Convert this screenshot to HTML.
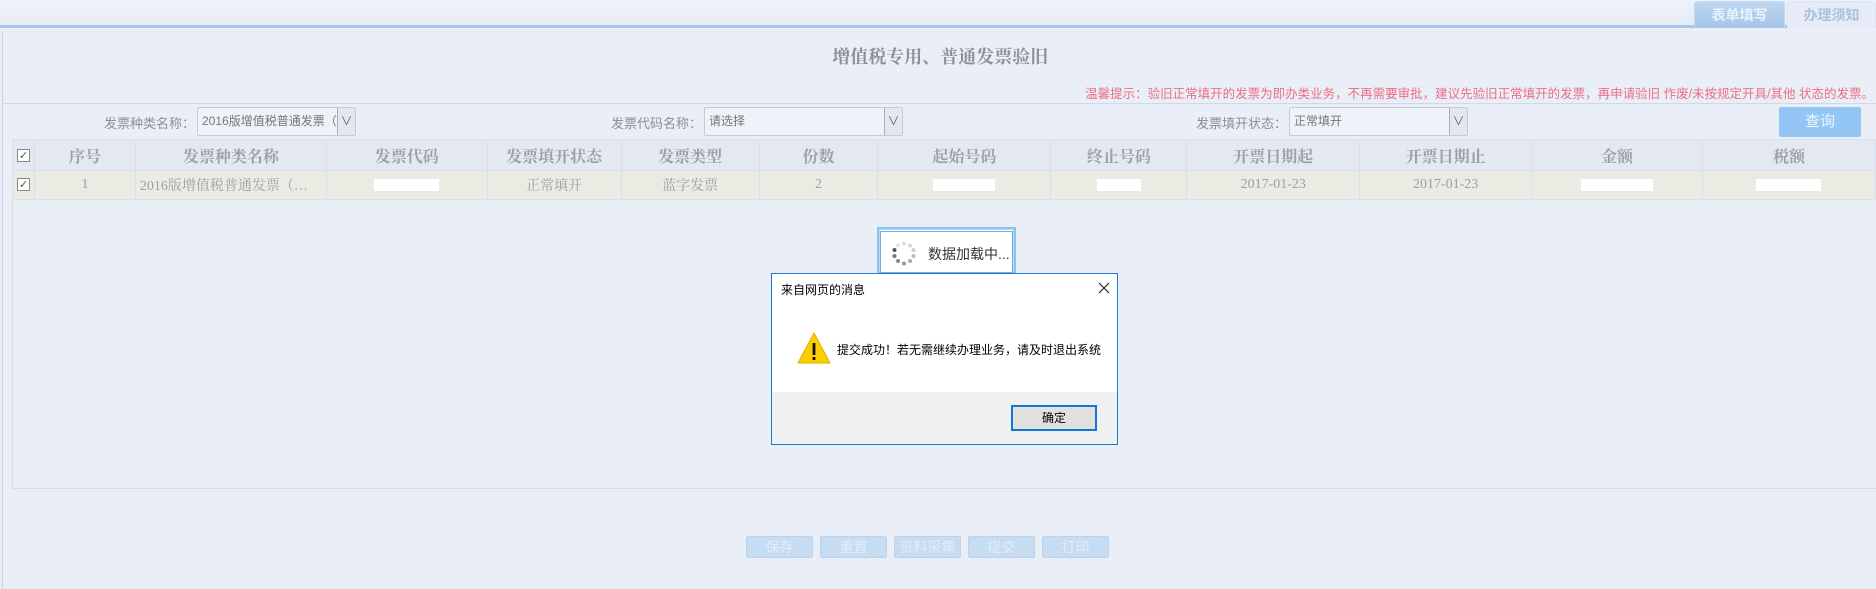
<!DOCTYPE html>
<html><head><meta charset="utf-8">
<style>
*{margin:0;padding:0;box-sizing:border-box}
body{width:1876px;height:589px;background:#e9eef7;font-family:"Liberation Sans","Noto Sans CJK SC",sans-serif;position:relative;overflow:hidden;color:#8a8f99}
.abs{position:absolute}
.topbar{left:0;top:0;width:1876px;height:28px;background:linear-gradient(#eef2fa,#e6ebf5);border-bottom:3px solid #aac6e8}
.tab{top:1px;height:27px;font-size:14px;font-weight:bold;text-align:center;line-height:27px;border:1px solid #c8d8ee;border-bottom:none;border-radius:3px 3px 0 0}
.panel{left:2px;top:31px;width:1874px;height:558px;border-left:1px solid #c5d3e8}
.lbl{font-size:13px;color:#8a8f99;top:113px}
.sel{top:107px;height:29px;border:1px solid #c4ccd8;background:#eef2f9;font-size:12px;color:#777;line-height:27px;padding-left:4px;border-radius:2px;overflow:hidden;white-space:nowrap}
.sel i{position:absolute;right:0;top:0;width:18px;height:27px;border-left:1px solid #a8b0bc;background:#e4e8ee;font-style:normal;text-align:center;font-size:12px;color:#666}
table{position:absolute;left:12px;top:139px;border-collapse:collapse;width:1864px}
td{border:1px solid #d8e0ec;text-align:center;font-family:"Liberation Serif","Noto Serif CJK SC",serif}
tr.h td{height:31px;background:#e3e8f3;font-size:16px;font-weight:bold;color:#9a9fa8}
tr.d td{height:29px;background:#ebebe3;font-size:14px;color:#9a9fa8}
.cb{display:inline-block;width:13px;height:13px;border:1px solid #888;background:#fff;font-size:11px;line-height:11px;color:#555;font-family:"DejaVu Sans",sans-serif}
.wb{display:inline-block;width:62px;height:12px;background:#fff;vertical-align:middle}
.btn{top:536px;width:67px;height:22px;background:#c6dcf2;border:1px solid #bcd2ec;border-radius:2px;color:#e4ecf6;font-size:14px;text-align:center;line-height:20px}
</style></head><body>
<div class="abs topbar"></div>
<div class="abs tab" style="left:1694px;width:91px;background:linear-gradient(#bcd6f0,#a6c6e8);color:#eaf2fb">表单填写</div>
<div class="abs tab" style="left:1787px;width:89px;background:#e6ebf6;color:#a7c1e2;border-color:#dde6f3">办理须知</div>
<div class="abs panel"></div>
<div class="abs" style="left:0;width:1876px;top:43px;text-align:center;font-size:18px;font-weight:bold;color:#8a8f99;font-family:'Liberation Serif','Noto Serif CJK SC',serif">&nbsp;增值税专用、普通发票验旧</div>
<div class="abs" style="right:2px;top:83px;font-size:12.5px;color:#ee6f82;white-space:nowrap">温馨提示：验旧正常填开的发票为即办类业务，不再需要审批，建议先验旧正常填开的发票，再申请验旧 作废/未按规定开具/其他 状态的发票。</div>
<div class="abs" style="left:3px;top:103px;width:1873px;height:1px;background:#cfd9e8"></div>
<div class="abs lbl" style="left:104px">发票种类名称：</div>
<div class="abs sel" style="left:197px;width:159px">2016版增值税普通发票（<i>∨</i></div>
<div class="abs lbl" style="left:611px">发票代码名称：</div>
<div class="abs sel" style="left:704px;width:199px">请选择<i>∨</i></div>
<div class="abs lbl" style="left:1196px">发票填开状态：</div>
<div class="abs sel" style="left:1289px;width:179px">正常填开<i>∨</i></div>
<div class="abs" style="left:1779px;top:107px;width:82px;height:30px;background:#93c6f4;border-radius:2px;color:#eef6ff;font-size:15px;text-align:center;line-height:30px">查询</div>
<div class="abs" style="left:12px;top:139px;width:1864px;height:350px;border:1px solid #d5dde9;border-right:none"></div>
<table>
<colgroup><col style="width:22px"><col style="width:101px"><col style="width:191px"><col style="width:161px"><col style="width:134px"><col style="width:138px"><col style="width:119px"><col style="width:173px"><col style="width:136px"><col style="width:173px"><col style="width:172px"><col style="width:171px"><col style="width:173px"></colgroup>
<tr class="h"><td><span class="cb">✓</span></td><td>序号</td><td>发票种类名称</td><td>发票代码</td><td>发票填开状态</td><td>发票类型</td><td>份数</td><td>起始号码</td><td>终止号码</td><td>开票日期起</td><td>开票日期止</td><td>金额</td><td>税额</td></tr>
<tr class="d"><td><span class="cb">✓</span></td><td>1</td><td style="text-align:left;padding-left:4px">2016版增值税普通发票（…</td><td><span class="wb" style="width:65px"></span></td><td>正常填开</td><td>蓝字发票</td><td>2</td><td><span class="wb"></span></td><td><span class="wb" style="width:44px"></span></td><td>2017-01-23</td><td>2017-01-23</td><td><span class="wb" style="width:72px"></span></td><td><span class="wb" style="width:65px"></span></td></tr>
</table>
<div class="abs" style="left:877px;top:227px;width:139px;height:47px;border:2px solid #8cc2ee;background:#fff;box-shadow:0 0 0 1px #b8d8f4 inset"></div>
<div class="abs" style="left:880px;top:231px;width:133px;height:42px;border:1px solid #6fb1ea;background:#fff"></div>
<svg class="abs" style="left:890px;top:240px" width="28" height="28" viewBox="0 0 28 28">
<g fill="#888"><circle cx="14" cy="3.5" r="2" fill="#ddd"/><circle cx="20" cy="5.5" r="2" fill="#d6d6d6"/><circle cx="23.5" cy="10" r="2" fill="#ccc"/><circle cx="23.5" cy="16" r="2" fill="#bbb"/><circle cx="20" cy="21" r="2" fill="#aaa"/><circle cx="14" cy="23.5" r="2" fill="#999"/><circle cx="8" cy="21" r="2" fill="#888"/><circle cx="4.5" cy="16" r="2" fill="#777"/><circle cx="4.5" cy="10" r="2" fill="#555"/><circle cx="8" cy="5.5" r="2" fill="#e6e6e6"/></g></svg>
<div class="abs" style="left:928px;top:244px;font-size:14px;color:#333">数据加载中...</div>
<div class="abs" style="left:771px;top:273px;width:347px;height:172px;border:1px solid #1c7ad6;background:#fff"></div>
<div class="abs" style="left:772px;top:392px;width:345px;height:52px;background:#f0f0f0"></div>
<div class="abs" style="left:781px;top:281px;font-size:12px;color:#000">来自网页的消息</div>
<svg class="abs" style="left:1097px;top:281px" width="14" height="14"><path d="M2 2L12 12M12 2L2 12" stroke="#222" stroke-width="1.2"/></svg>
<svg class="abs" style="left:797px;top:332px" width="34" height="32"><path d="M17 1L33 31H1Z" fill="#fcd000" stroke="#e3ac00" stroke-width="1"/><rect x="15.6" y="11" width="2.8" height="12" fill="#111"/><rect x="15.6" y="25" width="2.8" height="3" fill="#111"/></svg>
<div class="abs" style="left:837px;top:341px;font-size:12px;color:#000">提交成功！若无需继续办理业务，请及时退出系统</div>
<div class="abs" style="left:1011px;top:405px;width:86px;height:26px;border:2px solid #0f78d7;background:#e1e1e1;font-size:12px;color:#000;text-align:center;line-height:22px">确定</div>
<div class="abs btn" style="left:746px">保存</div>
<div class="abs btn" style="left:820px">重置</div>
<div class="abs btn" style="left:894px">资料采集</div>
<div class="abs btn" style="left:968px">提交</div>
<div class="abs btn" style="left:1042px">打印</div>
</body></html>
